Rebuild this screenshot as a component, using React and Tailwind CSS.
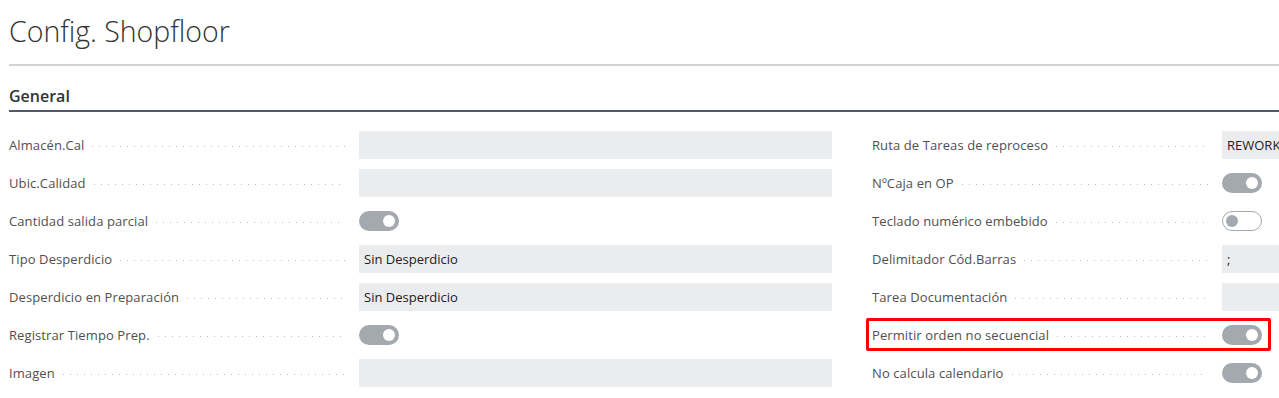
import React from "react";

const left = [
  { label: "Almacén.Cal", type: "input", value: "" },
  { label: "Ubic.Calidad", type: "input", value: "" },
  { label: "Cantidad salida parcial", type: "toggle", on: true },
  { label: "Tipo Desperdicio", type: "input", value: "Sin Desperdicio" },
  { label: "Desperdicio en Preparación", type: "input", value: "Sin Desperdicio" },
  { label: "Registrar Tiempo Prep.", type: "toggle", on: true },
  { label: "Imagen", type: "input", value: "" },
];

const right = [
  { label: "Ruta de Tareas de reproceso", type: "input", value: "REWORK" },
  { label: "NºCaja en OP", type: "toggle", on: true },
  { label: "Teclado numérico embebido", type: "toggle", on: false },
  { label: "Delimitador Cód.Barras", type: "input", value: ";" },
  { label: "Tarea Documentación", type: "input", value: "" },
  { label: "Permitir orden no secuencial", type: "toggle", on: true, marked: true },
  { label: "No calcula calendario", type: "toggle", on: true },
];

function Toggle({ on }) {
  if (on) {
    return (
      <div className="w-[40px] h-[20px] rounded-full bg-[#a4a8af] flex items-center justify-end pr-[4px]">
        <div className="w-[12px] h-[12px] rounded-full bg-white" />
      </div>
    );
  }
  return (
    <div className="w-[40px] h-[20px] rounded-full bg-white border border-[#a4a8af] flex items-center pl-[3px]">
      <div className="w-[12px] h-[12px] rounded-full bg-[#a4a8af]" />
    </div>
  );
}

function Field({ row }) {
  return (
    <div className="relative flex items-center h-[38px]">
      {row.marked && (
        <div className="absolute left-[-6px] top-[2px] w-[405px] h-[33px] border-[3px] border-[#ff0000] rounded-[2px] pointer-events-none" />
      )}
      <div className="w-[350px] shrink-0 flex items-center pr-[14px] pt-[2px]">
        <span className="text-[13px] text-[#505050] whitespace-nowrap tracking-[0.1px]">{row.label}</span>
        <div className="flex-1 ml-[8px] mt-[1px] h-[1px] bg-[linear-gradient(to_right,#bdbdbd_1px,transparent_1px)] bg-[length:7px_1px] bg-repeat-x" />
      </div>
      {row.type === "input" ? (
        <div className="w-[473px] shrink-0 h-[28px] bg-[#ebeced] flex items-center px-[5px] pt-[1px] text-[13px] text-[#212121] whitespace-nowrap">
          {row.value}
        </div>
      ) : (
        <div className="w-[473px] shrink-0">
          <Toggle on={row.on} />
        </div>
      )}
    </div>
  );
}

export default function App() {
  return (
    <div
      className="w-[1279px] h-[398px] overflow-hidden bg-white"
      style={{ fontFamily: '"Open Sans", "Noto Sans", sans-serif' }}
    >
      <div className="pl-[9px]">
        <div className="h-[66px] pt-[11px] border-b-2 border-[#d1d4d7]">
          <h1 className="text-[28.5px] font-light text-[#333333] leading-[40px]">Config. Shopfloor</h1>
        </div>
        <div className="h-[46px] pt-[19px] border-b-2 border-[#505a6b]">
          <h2 className="text-[16px] font-semibold text-[#333333] leading-[22px]">General</h2>
        </div>
        <div className="flex gap-[40px] pt-[14px]">
          <div className="w-[823px] shrink-0 flex flex-col">
            {left.map((r) => (
              <Field key={r.label} row={r} />
            ))}
          </div>
          <div className="w-[823px] shrink-0 flex flex-col">
            {right.map((r) => (
              <Field key={r.label} row={r} />
            ))}
          </div>
        </div>
      </div>
    </div>
  );
}
